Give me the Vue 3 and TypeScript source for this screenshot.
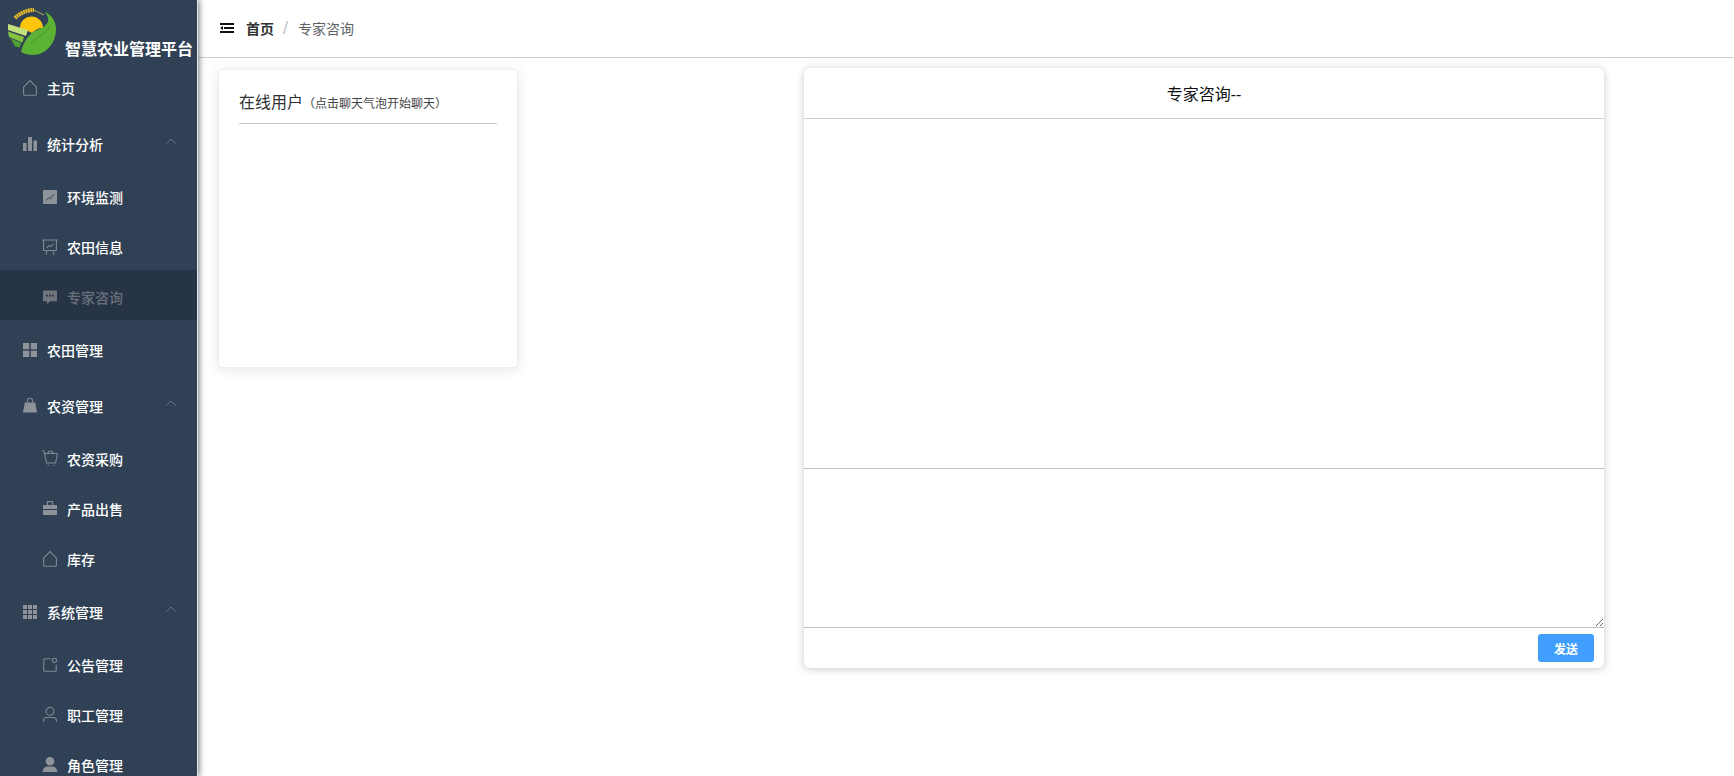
<script setup lang="ts">
type Shape = { d: string; kind: 'fill' | 'stroke' | 'cut' }
type Item = { label: string; icon: string; level: 1 | 2; arrow?: boolean; active?: boolean }

const icons: Record<string, Shape[]> = {
  house: [{ kind: 'stroke', d: 'M.6 6.200 7-.4l6.400 6.600v7a1 1 0 0 1-1 1H1.600a1 1 0 0 1-1-1z' }],
  bars: [{ kind: 'fill', d: 'M0 6h3.600v8H0zM5 0h4v14H5zM10.400 3.600H14V14h-3.600z' }],
  line: [
    { kind: 'fill', d: 'M0 0h14v14H0z' },
    { kind: 'cut', d: 'M3 10.500 6 7.500l1.500 1.200L11 4.200' }
  ],
  board: [
    { kind: 'stroke', d: 'M-1 0h16M.6 0v10.500h12.800V0M4 10.500 3 15M10 10.500l1 4.500M3.600 7.800 6 5.400l1.600 1.200 2.800-2.800' }
  ],
  chat: [
    {
      kind: 'fill',
      d: 'M1 .4h12a1 1 0 0 1 1 1v8.800a1 1 0 0 1-1 1H7.400L4 14v-2.800H1a1 1 0 0 1-1-1V1.400a1 1 0 0 1 1-1zM3.200 4.800v1.800H5V4.800zM6.100 4.800v1.800h1.800V4.800zM9 4.800v1.800h1.800V4.800z'
    }
  ],
  menu: [{ kind: 'fill', d: 'M0 0h6.200v6.200H0zM7.800 0H14v6.200H7.800zM0 7.800h6.200V14H0zM7.800 7.800H14V14H7.800z' }],
  bag: [
    { kind: 'fill', d: 'M1.800 3.400h10.400L14 13.500H0z' },
    { kind: 'stroke', d: 'M4.400 5V1.800a2.600 2.600 0 0 1 5.200 0V5' }
  ],
  cart: [
    { kind: 'stroke', d: 'M-1-1h2L3.500 11h9l2-9.500H2M5 1.500a2.500 2.500 0 0 1 5 0M4.500 13.300h1.400M10.500 13.300h1.400' }
  ],
  case: [
    { kind: 'fill', d: 'M0 3h14v4H0zM0 8h14v5H0z' },
    { kind: 'stroke', d: 'M4.400 3V-.4h5.200V3' }
  ],
  grid: [
    {
      kind: 'fill',
      d: 'M0 0h4v4H0zM5 0h4v4H5zM10 0h4v4h-4zM0 5h4v4H0zM5 5h4v4H5zM10 5h4v4h-4zM0 10h4v4H0zM5 10h4v4H5zM10 10h4v4h-4z'
    }
  ],
  notice: [
    {
      kind: 'stroke',
      d: 'M7.800.8H1.800a1 1 0 0 0-1 1v10.400a1 1 0 0 0 1 1h10.400a1 1 0 0 0 1-1V6.500M13.600 2.400a2.200 2.200 0 1 1-4.400 0 2.200 2.200 0 0 1 4.400 0z'
    }
  ],
  user: [
    {
      kind: 'stroke',
      d: 'M11 3.400a4 4 0 1 1-8 0 4 4 0 0 1 8 0zM.6 14v-1.500a3 3 0 0 1 3-3h6.800a3 3 0 0 1 3 3V14'
    }
  ],
  person: [
    {
      kind: 'fill',
      d: 'M11.300 3.200a4.300 4.300 0 1 1-8.600 0 4.300 4.300 0 0 1 8.600 0zM-.4 14c0-3 2.200-5.500 4.800-5.500h5.200c2.600 0 4.800 2.500 4.800 5.500z'
    }
  ]
}

const menu: Item[] = [
  { label: '主页', icon: 'house', level: 1 },
  { label: '统计分析', icon: 'bars', level: 1, arrow: true },
  { label: '环境监测', icon: 'line', level: 2 },
  { label: '农田信息', icon: 'board', level: 2 },
  { label: '专家咨询', icon: 'chat', level: 2, active: true },
  { label: '农田管理', icon: 'menu', level: 1 },
  { label: '农资管理', icon: 'bag', level: 1, arrow: true },
  { label: '农资采购', icon: 'cart', level: 2 },
  { label: '产品出售', icon: 'case', level: 2 },
  { label: '库存', icon: 'house', level: 2 },
  { label: '系统管理', icon: 'grid', level: 1, arrow: true },
  { label: '公告管理', icon: 'notice', level: 2 },
  { label: '职工管理', icon: 'user', level: 2 },
  { label: '角色管理', icon: 'person', level: 2 }
]
</script>

<template>
  <div class="layout">
    <aside class="sidebar">
      <div class="brand">
        <svg class="logo" viewBox="7 7 50 50" width="50" height="50" aria-hidden="true">
          <path d="M20 28A11.500 11.500 0 0 1 43 28C38 28 35 30 32 33l-4-2z" fill="#fdc50c" />
          <path d="M15 18C20 13 27 10 34 10" fill="none" stroke="#e6bb2b" stroke-width="4" stroke-dasharray="2 .5" />
          <path d="M34 10l10 5" fill="none" stroke="#d9c24a" stroke-width=".8" />
          <path d="M45 12C52 15 56 22 56 29 56 44 45 55 33 55 28 55 25 54 21 52 23 44 26 38 33 32 38 29 44 29 48 22 49 18 47 15 45 12z" fill="#5cb233" />
          <path d="M50 27C44 34 38 37 31 43" fill="none" stroke="#3f8f2f" stroke-width=".8" />
          <path d="M8 24l20 6-2 6-18-6z" fill="#c5e17c" />
          <path d="M8 31.500l16 5.500-1.500 5.500L9 37z" fill="#84c23f" />
          <path d="M10.500 38.500l11 4.500-2 4.500-4.500-1z" fill="#4f9f34" />
        </svg>
        <span class="brand-title">智慧农业管理平台</span>
      </div>
      <nav class="menu">
        <div
          v-for="item in menu"
          :key="item.label"
          class="menu-item"
          :class="[item.level === 1 ? 'top' : 'sub', { active: item.active }]"
        >
          <svg class="icon" viewBox="0 0 14 14" width="14" height="14" aria-hidden="true">
            <path v-for="(s, i) in icons[item.icon]" :key="i" :d="s.d" :class="s.kind" />
          </svg>
          <span>{{ item.label }}</span>
          <svg v-if="item.arrow" class="chevron" viewBox="0 0 10 6" width="10" height="6" aria-hidden="true">
            <path d="M.5 5.500 5 1l4.500 4.500" />
          </svg>
        </div>
      </nav>
    </aside>

    <div class="page">
      <header class="topbar">
        <svg class="fold" viewBox="0 0 14 10" width="14" height="10" aria-hidden="true">
          <path d="M0 0h14v2H0zM4 4h10v2H4zM0 8h14v2H0zM0 5l3-2v4z" />
        </svg>
        <span class="crumb-home">首页</span>
        <span class="crumb-sep">/</span>
        <span class="crumb-current">专家咨询</span>
      </header>

      <main class="content">
        <section class="users-card">
          <div class="users-title">在线用户<small>（点击聊天气泡开始聊天）</small></div>
        </section>

        <section class="chat-card">
          <div class="chat-head">专家咨询--</div>
          <div class="chat-log"></div>
          <textarea class="chat-input"></textarea>
          <div class="chat-foot">
            <button class="send" type="button">发送</button>
          </div>
        </section>
      </main>
    </div>
  </div>
</template>

<style>
html,
body {
  margin: 0;
  overflow: hidden;
  background: #fff;
}
</style>

<style scoped>
.layout {
  display: flex;
  height: 776px;
  overflow: hidden;
  font-family: "Liberation Sans", "Noto Sans CJK SC", sans-serif;
}

.sidebar {
  position: relative;
  z-index: 2;
  flex: 0 0 197px;
  height: 776px;
  overflow: hidden;
  background: #304156;
  box-shadow: 1px 0 0 #e4e6ea, 2px 0 6px rgba(0, 21, 41, 0.6);
}

.brand {
  display: flex;
  align-items: flex-start;
  height: 58px;
  padding: 7px 0 0 7px;
  box-sizing: border-box;
}

.logo {
  flex: none;
}

.brand-title {
  margin: 33px 0 0 8px;
  font-size: 16px;
  line-height: 20px;
  font-weight: 700;
  color: #fff;
  white-space: nowrap;
}

.menu-item {
  position: relative;
  display: flex;
  align-items: center;
  box-sizing: border-box;
  padding-top: 4px;
  font-size: 14px;
  font-weight: 500;
  color: #fff;
  white-space: nowrap;
}

.menu-item.top {
  height: 56px;
  padding-left: 23px;
}

.menu-item.sub {
  height: 50px;
  padding-left: 43px;
}

.menu-item.active {
  background: #263445;
  color: #6a717d;
}

.icon {
  flex: none;
  margin-right: 10px;
  overflow: visible;
}

.icon .fill {
  fill: #8e9299;
}

.icon .stroke {
  fill: none;
  stroke: #808792;
  stroke-width: 1.100;
}

.icon .cut {
  fill: none;
  stroke: #304156;
  stroke-width: 1;
}

.active .icon .fill {
  fill: #70757d;
}

.chevron {
  position: absolute;
  right: 21px;
  top: 24px;
}

.chevron path {
  fill: none;
  stroke: #69727f;
  stroke-width: 1;
}

.page {
  flex: 1;
  min-width: 0;
  display: flex;
  flex-direction: column;
}

.topbar {
  display: flex;
  align-items: center;
  height: 58px;
  box-sizing: border-box;
  padding: 0 0 2px 23px;
  border-bottom: 1px solid #cfcfcf;
  font-size: 14px;
}

.fold {
  flex: none;
  margin-right: 12px;
  fill: #111;
}

.crumb-home {
  font-weight: 700;
  color: #303133;
}

.crumb-sep {
  margin: 0 10px 0 9px;
  color: #c0c4cc;
  font-size: 18px;
  line-height: 1;
}

.crumb-current {
  color: #606266;
}

.content {
  display: flex;
  align-items: flex-start;
  padding: 10px 0 0 21px;
}

.users-card {
  flex: none;
  width: 300px;
  height: 299px;
  margin-top: 1px;
  box-sizing: border-box;
  padding: 19px 20px 0 20px;
  background: #fff;
  border-radius: 4px;
  border: 1px solid #ebeef5;
  box-shadow: 0 2px 12px rgba(0, 0, 0, 0.1);
}

.users-title {
  height: 34px;
  line-height: 28px;
  border-bottom: 1px solid #c8c8c8;
  font-size: 16px;
  color: #303133;
}

.users-title small {
  font-size: 12px;
  color: #444;
}

.chat-card {
  flex: none;
  width: 800px;
  height: 600px;
  margin-left: 286px;
  display: flex;
  flex-direction: column;
  background: #fff;
  border-radius: 6px;
  box-shadow: 0 1px 8px rgba(0, 0, 0, 0.22);
}

.chat-head {
  flex: none;
  height: 51px;
  box-sizing: border-box;
  padding-top: 15px;
  line-height: 24px;
  text-align: center;
  font-size: 16px;
  color: #111;
  border-bottom: 1px solid #cfcfcf;
}

.chat-log {
  flex: none;
  height: 349px;
}

.chat-input {
  display: block;
  flex: none;
  width: 100%;
  height: 160px;
  box-sizing: border-box;
  padding: 8px;
  margin: 0;
  border: 0;
  border-top: 1px solid #c0c0c0;
  border-bottom: 1px solid #c0c0c0;
  border-radius: 0;
  outline: none;
  background: #fff;
  font-family: inherit;
  font-size: 14px;
}

.chat-foot {
  flex: 1;
  display: flex;
  align-items: flex-start;
  justify-content: flex-end;
  padding: 6px 10px 0 0;
}

.send {
  width: 56px;
  height: 28px;
  padding: 0;
  border: 0;
  border-radius: 3px;
  background: #409eff;
  color: #fff;
  font-family: inherit;
  font-size: 12px;
  font-weight: 700;
}
</style>
